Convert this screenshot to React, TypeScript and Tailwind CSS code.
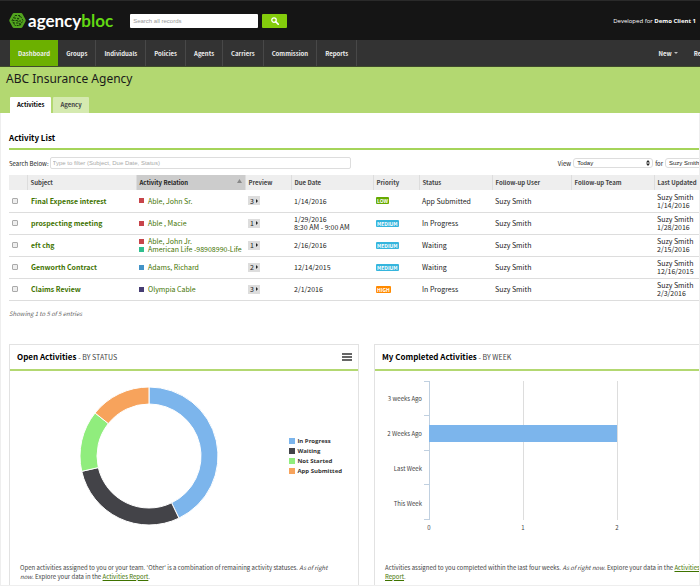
import React from 'react';

const sans = "font-['Noto_Sans_CJK_SC','Noto_Sans',sans-serif]";

const navItems = ['Dashboard', 'Groups', 'Individuals', 'Policies', 'Agents', 'Carriers', 'Commission', 'Reports'];

interface Relation {
  name: string;
  color: string;
}

interface Activity {
  subject: string;
  relations: Relation[];
  preview: number;
  due: string[];
  priority: 'LOW' | 'MEDIUM' | 'HIGH';
  status: string;
  updated: string;
}

const activities: Activity[] = [
  {
    subject: 'Final Expense interest',
    relations: [{ name: 'Able, John Sr.', color: 'bg-[#c7444a]' }],
    preview: 3,
    due: ['1/14/2016'],
    priority: 'LOW',
    status: 'App Submitted',
    updated: '1/14/2016',
  },
  {
    subject: 'prospecting meeting',
    relations: [{ name: 'Able , Macie', color: 'bg-[#c7444a]' }],
    preview: 1,
    due: ['1/29/2016', '8:30 AM - 9:00 AM'],
    priority: 'MEDIUM',
    status: 'In Progress',
    updated: '1/28/2016',
  },
  {
    subject: 'eft chg',
    relations: [
      { name: 'Able, John Jr.', color: 'bg-[#c7444a]' },
      { name: 'American Life -98908990-Life', color: 'bg-[#2fbf8f]' },
    ],
    preview: 1,
    due: ['2/16/2016'],
    priority: 'MEDIUM',
    status: 'Waiting',
    updated: '2/15/2016',
  },
  {
    subject: 'Genworth Contract',
    relations: [{ name: 'Adams, Richard', color: 'bg-[#4393c7]' }],
    preview: 2,
    due: ['12/14/2015'],
    priority: 'MEDIUM',
    status: 'Waiting',
    updated: '12/16/2015',
  },
  {
    subject: 'Claims Review',
    relations: [{ name: 'Olympia Cable', color: 'bg-[#463d73]' }],
    preview: 3,
    due: ['2/1/2016'],
    priority: 'HIGH',
    status: 'In Progress',
    updated: '2/3/2016',
  },
];

const priorityColors = {
  LOW: 'bg-[#66aa00]',
  MEDIUM: 'bg-[#35b5dd]',
  HIGH: 'bg-[#ff8a00]',
};

const columns = [
  { label: '', width: 'w-[18px]' },
  { label: 'Subject', width: 'w-[109px]' },
  { label: 'Activity Relation', width: 'w-[109px]' },
  { label: 'Preview', width: 'w-[46px]' },
  { label: 'Due Date', width: 'w-[82px]' },
  { label: 'Priority', width: 'w-[46px]' },
  { label: 'Status', width: 'w-[73px]' },
  { label: 'Follow-up User', width: 'w-[79px]' },
  { label: 'Follow-up Team', width: 'w-[83px]' },
  { label: 'Last Updated', width: '' },
];

const statuses = [
  { label: 'In Progress', value: 3, fill: '#7cb5ec', swatch: 'bg-[#7cb5ec]' },
  { label: 'Waiting', value: 2, fill: '#434348', swatch: 'bg-[#434348]' },
  { label: 'Not Started', value: 1, fill: '#90ed7d', swatch: 'bg-[#90ed7d]' },
  { label: 'App Submitted', value: 1, fill: '#f7a35c', swatch: 'bg-[#f7a35c]' },
];

const weeks = [
  { label: '3 weeks Ago', value: 0 },
  { label: '2 Weeks Ago', value: 2 },
  { label: 'Last Week', value: 0 },
  { label: 'This Week', value: 0 },
];

const Logo = () => (
  <a href="#" className="flex items-center gap-[2px] font-['Lato',sans-serif] text-[17px] leading-4 font-bold text-white">
    <svg width="17" height="17" viewBox="0 0 34 34" aria-hidden="true">
      <path d="M10 2h14q2 0 3 2l6 11q1 2 0 4l-6 11q-1 2-3 2H10q-2 0-3-2L1 19q-1-2 0-4L7 4q1-2 3-2z" fill="#52a31f" />
      <path
        d="M12 7h10l6 10-6 10H12L6 17zM7 17h10l5-9M17 17l5 9M10 12l9 1M8 22h10M22 16v9"
        fill="none"
        stroke="#173a09"
        strokeWidth="2"
        strokeDasharray="4 2"
      />
    </svg>
    <span>
      agency<span className="text-[#62d813]">bloc</span>
    </span>
  </a>
);

const Header = () => (
  <header className="flex h-10 items-center border-t border-[#2a2a2a] bg-[#151515] pr-1 pl-[9px]">
    <Logo />
    <form className="ml-[17px] flex items-center gap-1" onSubmit={(e) => e.preventDefault()}>
      <input
        type="text"
        aria-label="Search all records"
        placeholder="Search all records"
        className="h-[14px] w-32 rounded-[1px] bg-white px-[3px] font-['Liberation_Sans',sans-serif] text-[6px] placeholder:text-[#999]"
      />
      <button type="submit" aria-label="Search" className="flex h-[14px] w-[25px] items-center justify-center rounded-[1px] bg-[#84cc0c]">
        <svg width="8" height="8" viewBox="0 0 16 16" fill="none" stroke="white" aria-hidden="true">
          <circle cx="6" cy="6" r="4.5" strokeWidth="2.5" />
          <path d="M9.5 9.5l5 5" strokeWidth="3.5" strokeLinecap="round" />
        </svg>
      </button>
    </form>
    <p className="ml-auto pt-px font-['Open_Sans',sans-serif] text-[6px] leading-[9px] text-white">
      Developed for <b>Demo Client 1</b>
    </p>
  </header>
);

const NavBar = () => (
  <nav className="flex h-[27px] overflow-hidden border-b border-[#3f4a2c] bg-[#333] pl-[10px] text-[6px] font-bold whitespace-nowrap text-[#eee]">
    {navItems.map((item, idx) => (
      <a
        key={item}
        href="#"
        className={idx === 0 ? 'flex items-center bg-[#6cb000] px-2' : 'flex items-center border-r border-[#484848] px-2'}
      >
        {item}
      </a>
    ))}
    <div className="-mr-[18px] ml-auto flex items-center gap-4">
      <button type="button" className="flex items-center gap-[2px]">
        New
        <svg width="4" height="2" viewBox="0 0 4 2" fill="#bbb" aria-hidden="true">
          <path d="M0 0h4L2 2z" />
        </svg>
      </button>
      <button type="button" className="pr-1">
        Recent
      </button>
    </div>
  </nav>
);

const TitleBar = () => (
  <div className="flex h-[46px] flex-col justify-between bg-[#b3d871]">
    <h1 className="pt-1 pl-[6px] font-['Noto_Sans',sans-serif] text-[12px] leading-4 text-[#1a1a1a]">ABC Insurance Agency</h1>
    <div className="flex gap-[2px] pl-[10px] text-[6px] leading-4 font-bold">
      <a href="#" className="rounded-t-[1px] bg-white px-[7px] text-black">
        Activities
      </a>
      <a href="#" className="rounded-t-[1px] bg-[#d5eab0] px-[7px] text-[#444]">
        Agency
      </a>
    </div>
  </div>
);

const Filters = () => (
  <div className="mt-[7px] flex h-3 items-center text-[6px]">
    <label htmlFor="filter">Search Below:</label>
    <input
      id="filter"
      type="text"
      placeholder="Type to filter (Subject, Due Date, Status)"
      className="ml-px h-3 w-[301px] rounded-[2px] border border-[#ddd] px-[2px] font-['Liberation_Sans',sans-serif] text-[6px] placeholder:text-[#aaa]"
    />
    <label htmlFor="view" className="ml-auto">
      View
    </label>
    <div className="relative ml-[2px] flex">
      <select
        id="view"
        className="h-[10px] w-20 appearance-none rounded-[3px] border border-[#ddd] bg-white pl-[3px] font-['Liberation_Sans',sans-serif] text-[6px] leading-2"
      >
        <option>Today</option>
      </select>
      <svg className="pointer-events-none absolute top-[2px] right-[3px]" width="4" height="6" viewBox="0 0 4 6" aria-hidden="true">
        <path d="M0 2.5L2 0l2 2.5zM0 3.5h4L2 6z" fill="#222" />
      </svg>
    </div>
    <label htmlFor="owner" className="ml-[2px]">
      for
    </label>
    <select
      id="owner"
      className="ml-[2px] h-[10px] w-[59px] appearance-none rounded-[3px] border border-[#ddd] bg-white pl-[3px] font-['Liberation_Sans',sans-serif] text-[6px] leading-2"
    >
      <option>Suzy Smith</option>
    </select>
  </div>
);

const ActivityTable = () => (
  <table className="mt-[6px] w-full table-fixed border-collapse text-left text-[7px] leading-2">
    <thead>
      <tr className="h-[15px] bg-[#eee] text-[6px] text-[#444]">
        {columns.map((col) => (
          <th
            key={col.label}
            className={`${col.width} relative border-l border-[#ddd] p-0 pl-[3px] font-bold whitespace-nowrap first:border-l-0 ${
              col.label === 'Activity Relation' ? 'bg-[#ccc] text-[#222]' : ''
            }`}
          >
            {col.label}
            {col.label === 'Activity Relation' && (
              <svg className="absolute top-1 right-[3px]" width="5" height="4" viewBox="0 0 5 4" aria-hidden="true">
                <path d="M2.5 0L5 4H0z" fill="#888" />
              </svg>
            )}
          </th>
        ))}
      </tr>
    </thead>
    <tbody>
      {activities.map((row) => (
        <tr key={row.subject} className="h-[22px] border-b border-[#ddd] text-[#222] *:p-0 *:pl-[3px]">
          <td>
            <input
              type="checkbox"
              aria-label={row.subject}
              className="block size-[6px] appearance-none rounded-[1px] border border-[#aaa] bg-[#eee]"
            />
          </td>
          <td>
            <a href="#" className="pl-px font-bold text-[#3f7300]">
              {row.subject}
            </a>
          </td>
          <td>
            {row.relations.map((rel) => (
              <a key={rel.name} href="#" className="flex items-center gap-1 whitespace-nowrap text-[#3f7300]">
                <span className={`size-[5px] shrink-0 ${rel.color}`} />
                {rel.name}
              </a>
            ))}
          </td>
          <td>
            <button type="button" className="flex h-[9px] w-3 items-center justify-center gap-[2px] bg-[#ddd] text-[#222]">
              {row.preview}
              <svg width="2" height="4" viewBox="0 0 2 4" aria-hidden="true">
                <path d="M0 0l2 2-2 2z" fill="#222" />
              </svg>
            </button>
          </td>
          <td>
            {row.due.map((line) => (
              <div key={line}>{line}</div>
            ))}
          </td>
          <td>
            <span
              className={`block w-fit rounded-[1px] px-px text-[5px] leading-[7px] font-bold text-white ${priorityColors[row.priority]}`}
            >
              {row.priority}
            </span>
          </td>
          <td>{row.status}</td>
          <td>Suzy Smith</td>
          <td></td>
          <td>
            <div>Suzy Smith</div>
            <div>{row.updated}</div>
          </td>
        </tr>
      ))}
    </tbody>
  </table>
);

interface PanelProps {
  title: string;
  subtitle: string;
  note: string;
  children: React.ReactNode;
}

const Panel: React.FC<PanelProps> = ({ title, subtitle, note, children }) => (
  <section className="flex-1 border border-b-0 border-[#e2e2e2]">
    <div className="flex h-[26px] items-center justify-between border-b-2 border-[#b3d871] pr-[6px] pl-[7px]">
      <h2 className="text-[8px] leading-3 font-bold text-black">
        {title} <span className="text-[7px] font-normal text-[#444]">- {subtitle}</span>
      </h2>
      <button type="button" aria-label={`${title} menu`}>
        <svg width="10" height="8" viewBox="0 0 10 8" fill="#666" aria-hidden="true">
          <path d="M0 0h10v2H0zM0 3h10v2H0zM0 6h10v2H0z" />
        </svg>
      </button>
    </div>
    <div className="h-48">{children}</div>
    <p className="pr-[18px] pb-1 pl-[10px] text-[6px] leading-[9px] text-[#444]">
      {note} <i>As of right now</i>. Explore your data in the{' '}
      <a href="#" className="text-[#3f7300] underline">
        Activities Report
      </a>
      .
    </p>
  </section>
);

const point = (radius: number, turn: number) =>
  `${70 + radius * Math.sin(turn * 2 * Math.PI)} ${70 - radius * Math.cos(turn * 2 * Math.PI)}`;

const StatusDonut = () => {
  const total = statuses.reduce((sum, s) => sum + s.value, 0);
  let acc = 0;
  return (
    <div className="flex items-center justify-between pt-[15px] pr-4 pl-[69px]">
      <svg width="140" height="140" viewBox="0 0 140 140" role="img" aria-label="Open activities by status">
        {statuses.map((s) => {
          const from = acc / total;
          acc += s.value;
          const to = acc / total;
          const large = to - from > 0.5 ? 1 : 0;
          return (
            <path
              key={s.label}
              d={`M${point(69, from)}A69 69 0 ${large} 1 ${point(69, to)}L${point(52, to)}A52 52 0 ${large} 0 ${point(52, from)}Z`}
              fill={s.fill}
              stroke="white"
            />
          );
        })}
      </svg>
      <ul className="font-['Open_Sans',sans-serif] text-[6px] leading-[10px] font-bold text-[#333]">
        {statuses.map((s) => (
          <li key={s.label} className="flex items-center gap-[2px]">
            <span className={`size-[6px] ${s.swatch}`} />
            {s.label}
          </li>
        ))}
      </ul>
    </div>
  );
};

const WeekBars = () => (
  <svg width="348" height="170" viewBox="0 0 348 170" role="img" aria-label="Completed activities by week">
    <path d="M148.5 10v139M242.5 10v139M336.5 10v139" stroke="#ddd" />
    <path d="M54.5 10v139M49 10.5h5M49 44.5h5M49 79.5h5M49 113.5h5M49 148.5h5" stroke="#c0d0e0" fill="none" />
    {weeks.map((week, idx) => (
      <g key={week.label}>
        <rect x="54" y={19 + idx * 35} width={week.value * 94} height="17" fill="#7cb5ec" />
        <text x="47" y={30 + idx * 35} fontSize="6" textAnchor="end" fill="#444">
          {week.label}
        </text>
      </g>
    ))}
    {[0, 1, 2].map((tick) => (
      <text key={tick} x={54 + tick * 94} y="159" fontSize="6" textAnchor="middle" fill="#444">
        {tick}
      </text>
    ))}
  </svg>
);

export default function App() {
  return (
    <div className={`w-full overflow-hidden bg-white text-[#222] ${sans}`}>
      <Header />
      <NavBar />
      <TitleBar />
      <main className="overflow-hidden border border-t-0 border-[#eee] pl-2">
        <div className="-mr-[25px]">
          <h2 className="border-b-2 border-[#a5d45a] pt-[19px] pb-1 text-[8px] leading-3 font-bold text-black">Activity List</h2>
          <Filters />
          <ActivityTable />
          <p className="mt-2 text-[6px] leading-[9px] text-[#666] italic">Showing 1 to 5 of 5 entries</p>
          <div className="mt-[26px] flex gap-[15px]">
            <Panel
              title="Open Activities"
              subtitle="BY STATUS"
              note="Open activities assigned to you or your team. 'Other' is a combination of remaining activity statuses."
            >
              <StatusDonut />
            </Panel>
            <Panel
              title="My Completed Activities"
              subtitle="BY WEEK"
              note="Activities assigned to you completed within the last four weeks."
            >
              <WeekBars />
            </Panel>
          </div>
        </div>
      </main>
    </div>
  );
}
